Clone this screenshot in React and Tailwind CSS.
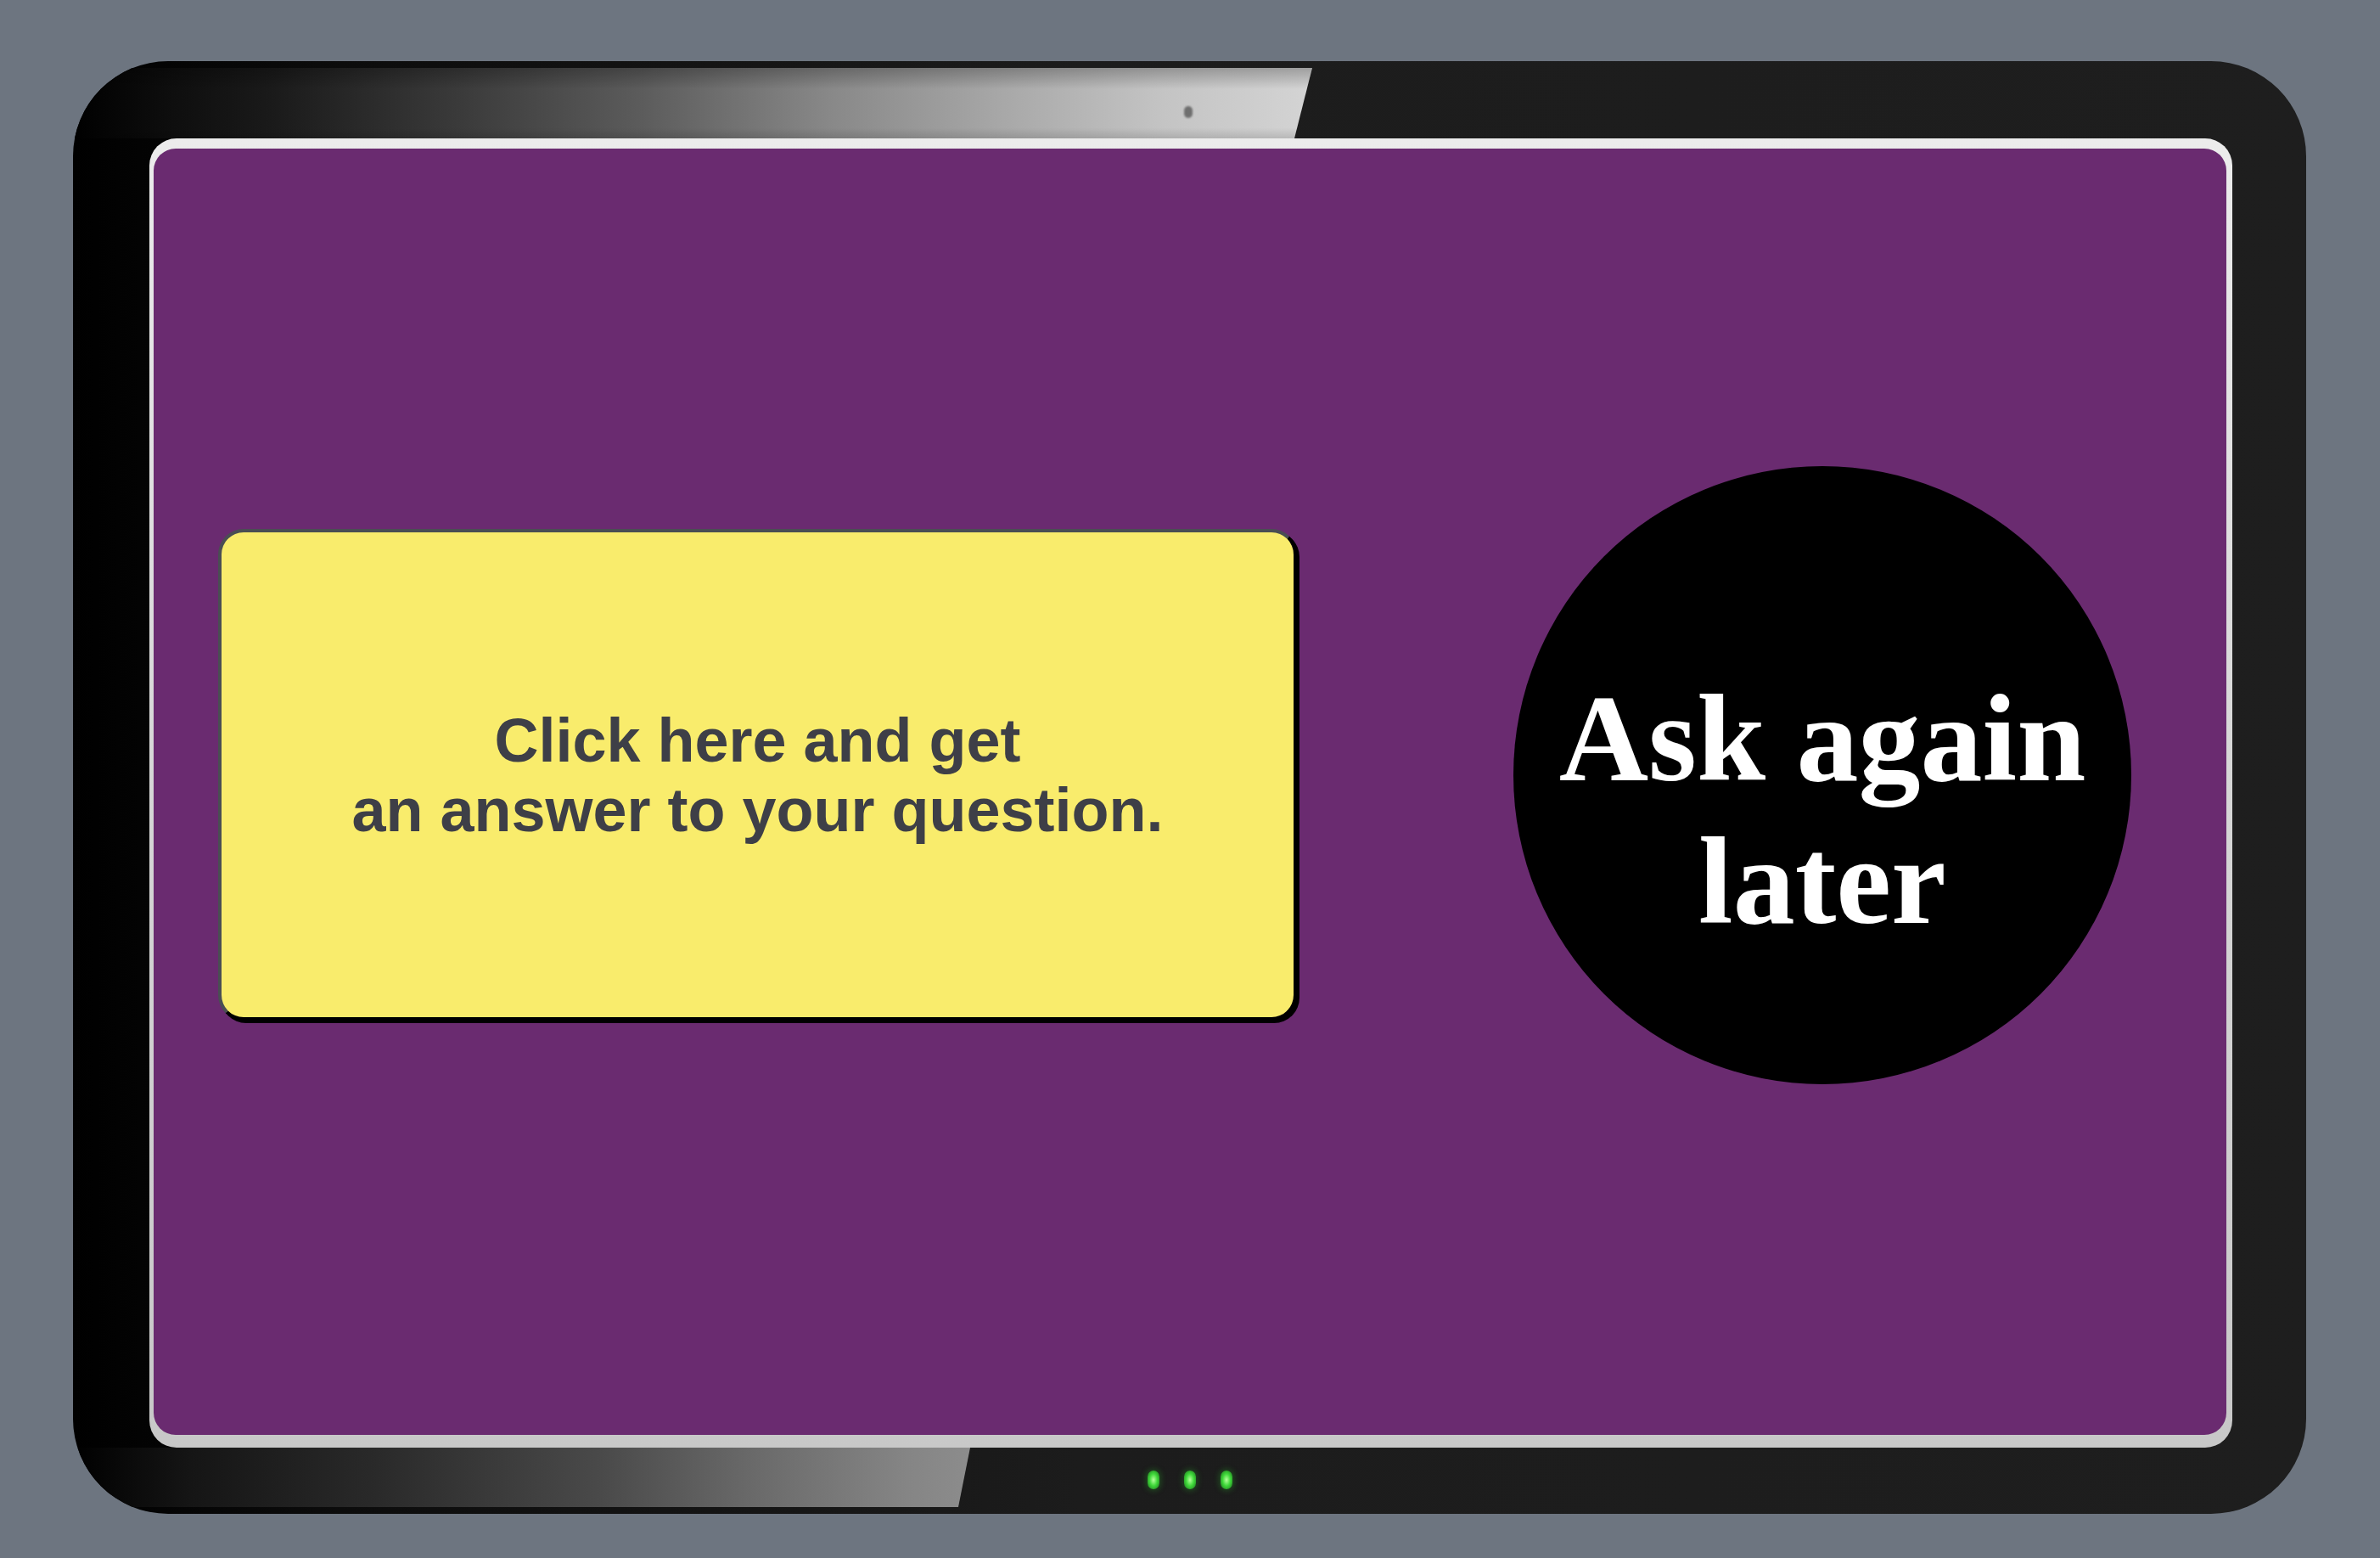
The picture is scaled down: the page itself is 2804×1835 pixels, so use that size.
import React from 'react';

export default function App() {
  return (
    <div className="w-[2804px] h-[1835px] bg-[#6d7580] pl-[86px] pt-[72px]">
      {/* Tablet body */}
      <div className="relative w-[2631px] h-[1711px] rounded-[112px] overflow-hidden bg-[linear-gradient(to_right,#000_0%,#0c0c0c_12%,#1c1c1c_45%,#1e1e1e_100%)] pt-[91px] pl-[90px] pr-[87px] pb-[78px] flex">
        {/* top glare */}
        <div className="absolute left-0 top-[8px] w-[1460px] h-[83px] [clip-path:polygon(0_0,100%_0,calc(100%-21px)_100%,0_100%)] bg-[linear-gradient(to_right,#000_0%,#0e0e0e_8%,#1a1a1a_16%,#3a3a3a_31%,#5c5c5c_46%,#888_61%,#aaa_76%,#c4c4c4_88%,#d4d4d4_100%)]">
          <div className="absolute inset-0 bg-[linear-gradient(to_bottom,rgba(0,0,0,0.25)_0%,rgba(0,0,0,0)_30%,rgba(0,0,0,0)_85%,rgba(0,0,0,0.12)_100%)]" />
        </div>
        {/* camera */}
        <div className="absolute left-[1309px] top-[53px] w-[10px] h-[14px] rounded-full bg-[#6f6f6f] blur-[1px]" />
        {/* bottom glare */}
        <div className="absolute left-0 top-[1633px] w-[1057px] h-[70px] [clip-path:polygon(0_0,100%_0,calc(100%-14px)_100%,0_100%)] bg-[linear-gradient(to_right,#000_0%,#0a0a0a_6%,#151515_13%,#2a2a2a_34%,#4a4a4a_59%,#6a6a6a_76%,#858585_93%,#8c8c8c_100%)]" />
        {/* LEDs */}
        <div className="absolute left-[1266px] top-[1660px] flex gap-[29px]">
          {[0, 1, 2].map(i => (
            <div key={i} className="w-[14px] h-[22px] rounded-full bg-[radial-gradient(ellipse_at_center,#b6ff9c_0%,#3fd93a_45%,#1c6e1c_100%)] shadow-[0_0_6px_2px_rgba(40,160,40,0.35)]" />
          ))}
        </div>

        {/* Screen frame */}
        <div className="relative z-10 flex-1 flex rounded-[32px] bg-[linear-gradient(to_bottom,#ececec_0%,#d6d6d6_50%,#c8c8c8_100%)] pt-[12px] pl-[5px] pr-[7px] pb-[15px]">
          <div className="flex-1 flex items-center rounded-[26px] bg-[#6a2b70] pl-[76px] pb-[40px]">
            <button className="w-[1271px] h-[579px] shrink-0 flex items-center justify-center rounded-[30px] bg-[#f9ec6c] border-[4px] border-[#4a4e53] border-r-black border-b-black shadow-[3px_3px_0_0_#000] text-center font-['Liberation_Sans',Arial,sans-serif] font-bold text-[72px] leading-[82px] text-[#3e3f47]">
              Click here and get
              <br />
              an answer to your question.
            </button>
            <div className="ml-[255px] w-[728px] h-[728px] shrink-0 rounded-full bg-black flex items-center justify-center pt-[82px] text-center font-['Liberation_Serif','Times_New_Roman',serif] font-bold text-[146px] leading-[168px] text-white">
              Ask again
              <br />
              later
            </div>
          </div>
        </div>
      </div>
    </div>
  );
}
